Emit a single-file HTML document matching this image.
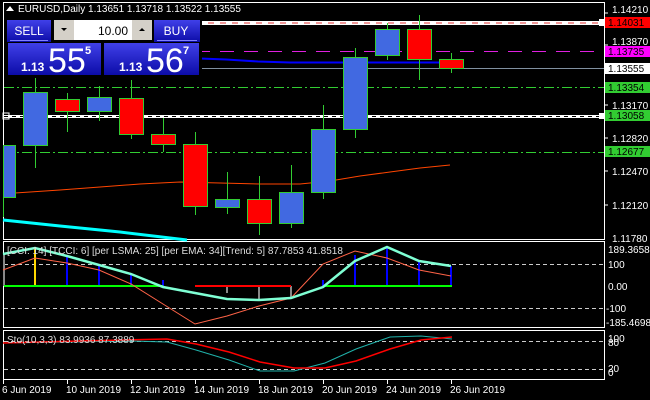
<!DOCTYPE html>
<html><head><meta charset="utf-8"><style>
html,body{margin:0;padding:0;background:#000;}
svg{display:block;font-family:"Liberation Sans",sans-serif;}
</style></head><body>
<svg width="650" height="400" viewBox="0 0 650 400" xmlns="http://www.w3.org/2000/svg">
<defs>
<linearGradient id="bg" x1="0" y1="0" x2="0" y2="1"><stop offset="0" stop-color="#4040e8"/><stop offset="1" stop-color="#0c0ca8"/></linearGradient>
</defs>
<rect width="650" height="400" fill="#000"/>
<!-- frames -->
<rect x="3.5" y="2.5" width="601" height="237" fill="none" stroke="#fff"/>
<rect x="3.5" y="241.5" width="601" height="86" fill="none" stroke="#fff"/>
<rect x="3.5" y="330.5" width="601" height="49" fill="none" stroke="#fff"/>
<!-- main horizontal lines -->
<line x1="4" y1="87.5" x2="604" y2="87.5" stroke="#32cd32" stroke-dasharray="10,3,2,3"/>
<line x1="4" y1="152.5" x2="604" y2="152.5" stroke="#32cd32" stroke-dasharray="10,3,2,3"/>
<line x1="4" y1="51.5" x2="604" y2="51.5" stroke="#e020e0" stroke-dasharray="14,10"/>
<line x1="200" y1="68.5" x2="604" y2="68.5" stroke="#8090a0"/>
<rect x="4" y="21" width="600" height="4" fill="#fff"/><line x1="4" y1="23" x2="604" y2="23" stroke="#e03030" stroke-dasharray="6,6"/>
<rect x="4" y="115" width="600" height="3" fill="#fff"/><line x1="4" y1="116.5" x2="604" y2="116.5" stroke="#000" stroke-dasharray="4,4"/>
<rect x="3" y="113" width="6" height="6" fill="none" stroke="#fff"/>
<rect x="599" y="19" width="6" height="7" fill="#fff"/><rect x="599" y="113" width="6" height="6" fill="#fff"/>
<!-- blue line -->
<polyline points="200,58.5 226,59.5 242,60.5 258,61.5 290,62.5 440,62.5" fill="none" stroke="#0000ff" stroke-width="2"/>
<!-- orange MA -->
<polyline points="15,193 60,190 100,187 140,184 180,182 220,183 260,184 300,184 330,181 360,176 390,172 420,168 450,165" fill="none" stroke="#ff4500" stroke-width="1"/>
<!-- cyan -->
<polyline points="3,220 60,226 120,232 187,240" fill="none" stroke="#00ffff" stroke-width="3"/>
<!-- candles -->
<g stroke="#32cd32" stroke-width="1">
<line x1="3.5" y1="145" x2="3.5" y2="217"/><rect x="3.5" y="145.5" width="12" height="52" fill="#4169e1"/>
<line x1="35.5" y1="78" x2="35.5" y2="168"/><rect x="23.5" y="92.5" width="24" height="53" fill="#4169e1"/>
<line x1="67.5" y1="93" x2="67.5" y2="132"/><rect x="55.5" y="99.5" width="24" height="12" fill="#ff0000"/>
<line x1="99.5" y1="86" x2="99.5" y2="121"/><rect x="87.5" y="97.5" width="24" height="14" fill="#4169e1"/>
<line x1="131.5" y1="80" x2="131.5" y2="139"/><rect x="119.5" y="98.5" width="24" height="36" fill="#ff0000"/>
<line x1="163.5" y1="118" x2="163.5" y2="152"/><rect x="151.5" y="134.5" width="24" height="10" fill="#ff0000"/>
<line x1="195.5" y1="132" x2="195.5" y2="215"/><rect x="183.5" y="144.5" width="24" height="62" fill="#ff0000"/>
<line x1="227.5" y1="172" x2="227.5" y2="214"/><rect x="215.5" y="199.5" width="24" height="8" fill="#4169e1"/>
<line x1="259.5" y1="176" x2="259.5" y2="235"/><rect x="247.5" y="199.5" width="24" height="24" fill="#ff0000"/>
<line x1="291.5" y1="165" x2="291.5" y2="228"/><rect x="279.5" y="192.5" width="24" height="31" fill="#4169e1"/>
<line x1="323.5" y1="105" x2="323.5" y2="199"/><rect x="311.5" y="129.5" width="24" height="63" fill="#4169e1"/>
<line x1="355.5" y1="48" x2="355.5" y2="138"/><rect x="343.5" y="57.5" width="24" height="72" fill="#4169e1"/>
<line x1="387.5" y1="23" x2="387.5" y2="60"/><rect x="375.5" y="29.5" width="24" height="26" fill="#4169e1"/>
<line x1="419.5" y1="15" x2="419.5" y2="80"/><rect x="407.5" y="29.5" width="24" height="30" fill="#ff0000"/>
<line x1="451.5" y1="53" x2="451.5" y2="73"/><rect x="439.5" y="59.5" width="24" height="9" fill="#ff0000"/>
</g>
<!-- price axis -->
<g font-size="10" fill="#fff">
<text x="612" y="13">1.14210</text>
<rect x="605" y="17" width="45" height="11" fill="#ff0000"/><text x="608" y="26" fill="#000">1.14031</text>
<text x="612" y="45">1.13870</text>
<rect x="605" y="46" width="45" height="11" fill="#ff00ff"/><text x="608" y="55" fill="#000">1.13735</text>
<rect x="605" y="63" width="45" height="11" fill="#fff"/><text x="608" y="72" fill="#000">1.13555</text>
<rect x="605" y="82" width="45" height="11" fill="#32cd32"/><text x="608" y="91" fill="#000">1.13354</text>
<text x="612" y="109">1.13170</text>
<rect x="605" y="110" width="45" height="11" fill="#32cd32"/><text x="608" y="119" fill="#000">1.13058</text>
<text x="612" y="142">1.12820</text>
<rect x="605" y="146" width="45" height="11" fill="#32cd32"/><text x="608" y="155" fill="#000">1.12677</text>
<text x="612" y="175">1.12470</text>
<text x="612" y="209">1.12120</text>
<text x="612" y="242">1.11780</text>
<text x="608" y="253">189.3658</text>
<text x="608" y="268">100</text>
<text x="608" y="290">0.00</text>
<text x="606" y="312">-100</text>
<text x="606" y="326">-185.4698</text>
<text x="608" y="342">100</text>
<text x="608" y="346">80</text>
<text x="608" y="372">20</text>
<text x="608" y="376">0</text>
</g>
<g stroke="#fff"><line x1="604" y1="13" x2="608" y2="13"/><line x1="604" y1="45" x2="608" y2="45"/><line x1="604" y1="105" x2="608" y2="105"/><line x1="604" y1="138" x2="608" y2="138"/><line x1="604" y1="171" x2="608" y2="171"/><line x1="604" y1="205" x2="608" y2="205"/></g>
<!-- indicator 1 -->
<g stroke="#ccc" stroke-dasharray="4,3"><line x1="4" y1="264.5" x2="604" y2="264.5"/><line x1="4" y1="308.5" x2="604" y2="308.5"/><line x1="4" y1="341.5" x2="604" y2="341.5"/><line x1="4" y1="369.5" x2="604" y2="369.5"/></g>
<g stroke-width="2">
<line x1="4" y1="254" x2="4" y2="286" stroke="#888"/>
<line x1="35" y1="248" x2="35" y2="286" stroke="#ffd700"/>
<line x1="67" y1="256" x2="67" y2="286" stroke="#0000ff"/>
<line x1="99" y1="265" x2="99" y2="286" stroke="#0000ff"/>
<line x1="131" y1="274" x2="131" y2="286" stroke="#0000ff"/>
<line x1="163" y1="280" x2="163" y2="286" stroke="#0000ff"/>
<line x1="227" y1="286" x2="227" y2="293" stroke="#888"/>
<line x1="259" y1="286" x2="259" y2="300" stroke="#888"/>
<line x1="291" y1="286" x2="291" y2="299" stroke="#888"/>
<line x1="323" y1="280" x2="323" y2="286" stroke="#0000ff"/>
<line x1="355" y1="255" x2="355" y2="286" stroke="#0000ff"/>
<line x1="387" y1="248" x2="387" y2="286" stroke="#0000ff"/>
<line x1="419" y1="261" x2="419" y2="286" stroke="#0000ff"/>
<line x1="451" y1="266" x2="451" y2="286" stroke="#0000ff"/>
<line x1="4" y1="286" x2="163" y2="286" stroke="#00ff00"/>
<line x1="323" y1="286" x2="452" y2="286" stroke="#00ff00"/>
<line x1="195" y1="286" x2="291" y2="286" stroke="#ff0000"/>
</g>
<polyline points="3,270 35,258 67,263 99,270 131,284 163,304 195,324 227,316 259,306 291,298 323,264 355,251 387,258 419,270 451,276" fill="none" stroke="#ff6347" stroke-width="1"/>
<polyline points="3,254 35,248 67,256 99,265 131,274 163,287 195,293 227,299 259,300 291,298 323,287 355,261 387,247 419,261 451,266" fill="none" stroke="#7fffd4" stroke-width="2.5"/>
<text x="7" y="254" font-size="10" fill="#ddd">[CCI: 14] [TCCI: 6] [per LSMA: 25] [per EMA: 34][Trend: 5]  87.7853 41.8518</text>
<!-- stochastic -->
<polyline points="3,343 130,341 167,342 196,350 229,360 260,371 294,371 325,363 356,349 390,337 421,336 452,339" fill="none" stroke="#20b2aa" stroke-width="1"/>
<polyline points="3,343 80,341 167,339 196,344 229,352 260,362 294,368 325,368 356,361 390,349 421,340 452,337" fill="none" stroke="#ff0000" stroke-width="1.5"/>
<text x="7" y="343" font-size="10" fill="#ddd">Sto(10,3,3) 83.9936 87.3889</text>
<!-- dates -->
<g stroke="#fff"><line x1="3.5" y1="380" x2="3.5" y2="384"/><line x1="67.5" y1="380" x2="67.5" y2="384"/><line x1="131.5" y1="380" x2="131.5" y2="384"/><line x1="195.5" y1="380" x2="195.5" y2="384"/><line x1="259.5" y1="380" x2="259.5" y2="384"/><line x1="323.5" y1="380" x2="323.5" y2="384"/><line x1="387.5" y1="380" x2="387.5" y2="384"/><line x1="451.5" y1="380" x2="451.5" y2="384"/></g>
<g font-size="10" fill="#fff">
<text x="2" y="393">6 Jun 2019</text><text x="66" y="393">10 Jun 2019</text><text x="130" y="393">12 Jun 2019</text><text x="194" y="393">14 Jun 2019</text><text x="258" y="393">18 Jun 2019</text><text x="322" y="393">20 Jun 2019</text><text x="386" y="393">24 Jun 2019</text><text x="450" y="393">26 Jun 2019</text>
</g>
<!-- header -->
<path d="M6 11 L10 6 L14 11 Z" fill="#fff"/>
<text x="18" y="12" font-size="10" fill="#fff">EURUSD,Daily  1.13651 1.13718 1.13522 1.13555</text>
<!-- trade panel -->
<rect x="4" y="18" width="198" height="59" fill="#000"/>
<rect x="7" y="20" width="44" height="22" fill="url(#bg)"/>
<line x1="10" y1="40.5" x2="48" y2="40.5" stroke="#8080ff"/>
<text x="29" y="35" font-size="12" fill="#fff" text-anchor="middle">SELL</text>
<rect x="154" y="20" width="46" height="22" fill="url(#bg)"/>
<line x1="157" y1="40.5" x2="197" y2="40.5" stroke="#8080ff"/>
<text x="176" y="35" font-size="12" fill="#fff" text-anchor="middle">BUY</text>
<rect x="54" y="20" width="98" height="20" fill="#d4d0c8"/>
<rect x="74" y="20" width="58" height="20" fill="#fff"/>
<path d="M61 28 L67 28 L64 31 Z" fill="#000"/><path d="M139 31 L145 31 L142 28 Z" fill="#000"/>
<text x="128" y="35" font-size="12" fill="#000" text-anchor="end">10.00</text>
<rect x="8" y="43" width="93" height="32" fill="url(#bg)"/>
<rect x="104" y="43" width="95" height="32" fill="url(#bg)"/>
<text x="21" y="71" font-size="12" font-weight="bold" fill="#fff">1.13</text>
<text x="48" y="72" font-size="34" fill="#fff">55</text>
<text x="85" y="54" font-size="11" font-weight="bold" fill="#fff">5</text>
<text x="119" y="71" font-size="12" font-weight="bold" fill="#fff">1.13</text>
<text x="146" y="72" font-size="34" fill="#fff">56</text>
<text x="183" y="54" font-size="11" font-weight="bold" fill="#fff">7</text>
</svg>
</body></html>
